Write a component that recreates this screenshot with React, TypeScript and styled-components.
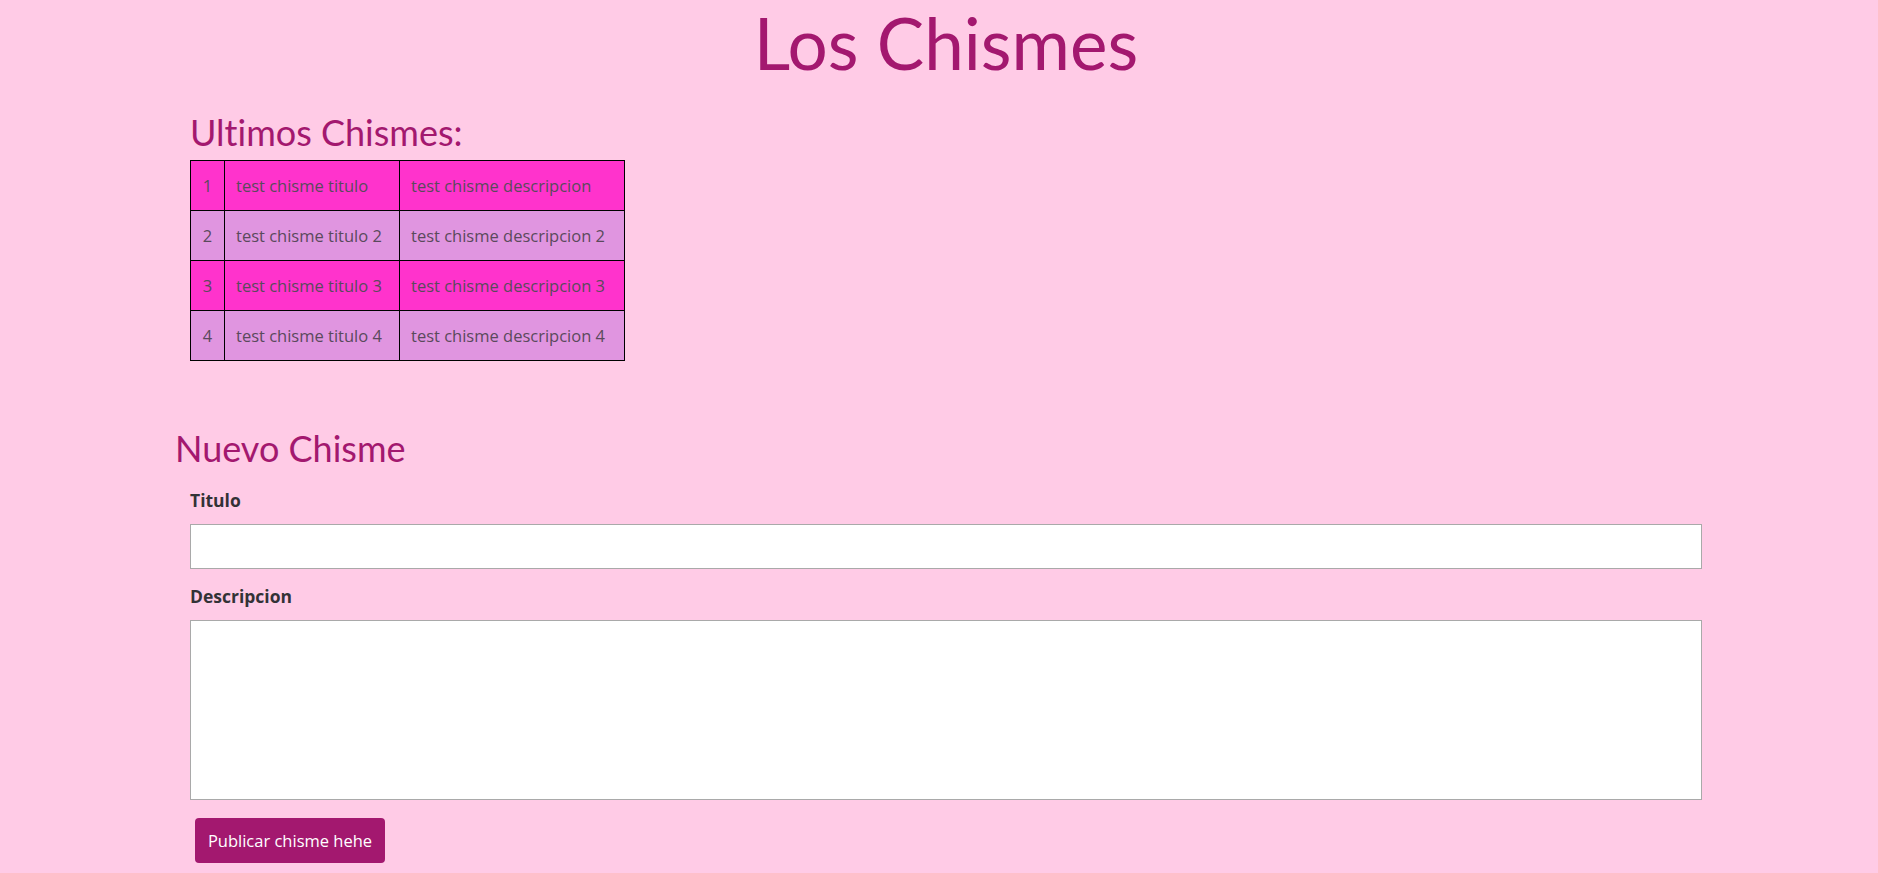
import styled, { createGlobalStyle } from 'styled-components'

const GlobalStyle = createGlobalStyle`
  html,
  body {
    background-color: #ffcbe6;
    margin: 0;
    padding: 0;
  }

  body {
    color: #212529;
    font-family: 'Open Sans', 'Noto Sans', sans-serif;
    font-variant-ligatures: none;
  }
`

const Page = styled.main`
  display: flex;
  flex-direction: column;
  padding: 0 176px 20px 190px;
`

const Title = styled.h1`
  color: #a3186f;
  font-family: Lato, 'Open Sans', sans-serif;
  font-size: 71px;
  font-weight: 400;
  line-height: 1.2;
  margin: 0;
  text-align: center;
`

const SectionTitle = styled.h2<{ $indent?: number; $top: number }>`
  color: #a3186f;
  font-family: Lato, 'Open Sans', sans-serif;
  font-size: 36px;
  font-weight: 400;
  line-height: 1.2;
  margin: ${({ $top }) => $top}px 0 0 ${({ $indent }) => $indent ?? 0}px;
`

const Table = styled.table`
  border-collapse: collapse;
  font-size: 16.5px;
  margin-top: 6px;
  table-layout: fixed;
  width: 434px;
`

const Row = styled.tr<{ $strong: boolean }>`
  background-color: ${({ $strong }) => ($strong ? '#ff33cc' : '#e095e0')};
  height: 50px;
`

const Cell = styled.td<{ $center?: boolean }>`
  border: 1px solid #000;
  color: #5a4a5c;
  padding: 0 11px;
  text-align: ${({ $center }) => ($center ? 'center' : 'left')};
  white-space: nowrap;
`

const Form = styled.form`
  display: flex;
  flex-direction: column;
  margin-top: 19px;
`

const Label = styled.label<{ $top: number }>`
  color: #333236;
  font-size: 17.5px;
  font-weight: 700;
  line-height: 1.2;
  margin-top: ${({ $top }) => $top}px;
`

const Input = styled.input`
  background: #fff;
  border: 1px solid #a9a9a9;
  box-sizing: border-box;
  font: inherit;
  height: 45px;
  margin-top: 13px;
  width: 100%;
`

const TextArea = styled.textarea`
  background: #fff;
  border: 1px solid #a9a9a9;
  box-sizing: border-box;
  font: inherit;
  height: 180px;
  margin-top: 13px;
  resize: none;
  width: 100%;
`

const Button = styled.button`
  align-self: flex-start;
  background-color: #a3186f;
  border: none;
  border-radius: 4px;
  color: #fff;
  cursor: pointer;
  font-family: inherit;
  font-size: 16.5px;
  height: 45px;
  margin: 18px 0 0 5px;
  padding: 0 10px;
  width: 190px;
`

const chismes = [
  { id: 1, titulo: 'test chisme titulo', descripcion: 'test chisme descripcion' },
  { id: 2, titulo: 'test chisme titulo 2', descripcion: 'test chisme descripcion 2' },
  { id: 3, titulo: 'test chisme titulo 3', descripcion: 'test chisme descripcion 3' },
  { id: 4, titulo: 'test chisme titulo 4', descripcion: 'test chisme descripcion 4' },
]

const App = () => {
  return (
    <>
      <GlobalStyle />
      <Page>
        <Title>Los Chismes</Title>
        <SectionTitle $top={26}>Ultimos Chismes:</SectionTitle>
        <Table>
          <colgroup>
            <col style={{ width: 34 }} />
            <col style={{ width: 175 }} />
            <col style={{ width: 225 }} />
          </colgroup>
          <tbody>
            {chismes.map((chisme, i) => (
              <Row key={chisme.id} $strong={i % 2 === 0}>
                <Cell $center>{chisme.id}</Cell>
                <Cell>{chisme.titulo}</Cell>
                <Cell>{chisme.descripcion}</Cell>
              </Row>
            ))}
          </tbody>
        </Table>
        <SectionTitle $top={66} $indent={-15}>
          Nuevo Chisme
        </SectionTitle>
        <Form onSubmit={(e) => e.preventDefault()}>
          <Label htmlFor="titulo" $top={0}>
            Titulo
          </Label>
          <Input id="titulo" type="text" />
          <Label htmlFor="descripcion" $top={17}>
            Descripcion
          </Label>
          <TextArea id="descripcion" />
          <Button type="submit">Publicar chisme hehe</Button>
        </Form>
      </Page>
    </>
  )
}

export default App
